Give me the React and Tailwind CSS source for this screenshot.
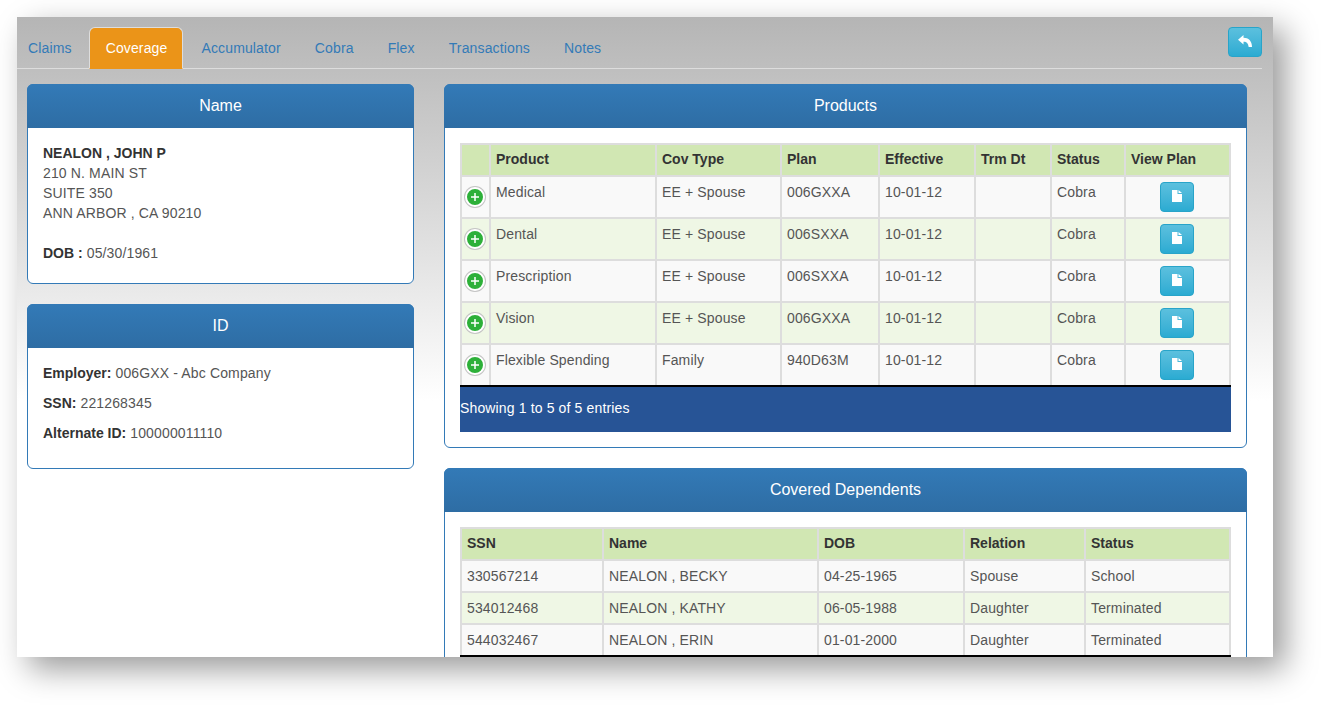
const tabs = ["Claims", "Coverage", "Accumulator", "Cobra", "Flex", "Transactions", "Notes"];

const products = [
  ["Medical", "EE + Spouse", "006GXXA", "10-01-12", "", "Cobra"],
  ["Dental", "EE + Spouse", "006SXXA", "10-01-12", "", "Cobra"],
  ["Prescription", "EE + Spouse", "006SXXA", "10-01-12", "", "Cobra"],
  ["Vision", "EE + Spouse", "006GXXA", "10-01-12", "", "Cobra"],
  ["Flexible Spending", "Family", "940D63M", "10-01-12", "", "Cobra"],
];

const dependents = [
  ["330567214", "NEALON , BECKY", "04-25-1965", "Spouse", "School"],
  ["534012468", "NEALON , KATHY", "06-05-1988", "Daughter", "Terminated"],
  ["544032467", "NEALON , ERIN", "01-01-2000", "Daughter", "Terminated"],
];

function Panel({ title, children, className = "" }) {
  return (
    <section className={`rounded-md border border-[#337ab7] bg-white ${className}`}>
      <h2 className="-mx-px -mt-px flex h-11 items-center justify-center rounded-t-md bg-linear-to-b from-[#337ab7] to-[#2e6da4] text-base tracking-normal text-white">
        {title}
      </h2>
      {children}
    </section>
  );
}

function ReplyIcon() {
  return (
    <svg viewBox="0 0 14 12" className="mb-0.5 h-3 w-3.5 fill-white">
      <path d="M5.500 0 0 4.700 5.500 9.500V6.800C8.500 6.600 10 8 10.700 12H14C14 6 10.500 2.800 5.500 2.800Z" />
    </svg>
  );
}

function FileIcon() {
  return (
    <svg viewBox="0 0 10 12" className="mb-0.5 h-3 w-2.5 fill-white">
      <path d="M0 0h5.500v4H10v8H0Z" />
      <path d="M6.500 0 10 3H6.500Z" />
    </svg>
  );
}

function PlusBadge() {
  return (
    <span className="mx-auto flex size-5 items-center justify-center rounded-full border-2 border-white bg-[#2db039] shadow-[0_0_0_1px_#c4c4c4]">
      <svg viewBox="0 0 8 8" className="size-2 stroke-white stroke-[1.5]">
        <path d="M4 0v8M0 4h8" />
      </svg>
    </span>
  );
}

const thClass = "h-8 border-2 border-[#ddd] bg-[#d1e7b3] px-1.25 pb-0.5 text-left font-bold tracking-normal text-[#333]";

export default function App() {
  return (
    <div className="h-[705px] overflow-hidden bg-white pt-[17px] pl-[17px] font-['Liberation_Sans',Arial,sans-serif] text-sm tracking-[0.01em] text-[#555]">
      <div className="h-[640px] w-[1256px] overflow-hidden bg-white bg-linear-to-b from-[#b5b5b5] to-white to-60% shadow-[12px_12px_30px_rgba(0,0,0,0.4)]">
        <div className="mr-2.75 flex items-start justify-between border-b border-[#ddd] pt-2.5">
          <ul className="-mb-px -ml-[5px] flex">
            {tabs.map((t) =>
              t === "Coverage" ? (
                <li key={t} className="mr-0.5 rounded-t-md border border-[#ddd] border-b-transparent bg-[#eb9418] py-2.5 pr-[15px] pl-4 leading-5 text-white">
                  {t}
                </li>
              ) : (
                <li key={t} className={`${t === "Claims" ? "mr-px" : "mr-0.5"} border border-transparent px-[15px] py-2.5 leading-5 text-[#337ab7]`}>
                  {t}
                </li>
              ),
            )}
          </ul>
          <button className="flex h-7.5 w-8.5 items-center justify-center rounded border border-[#28a4c9] bg-linear-to-b from-[#5bc0de] to-[#2aabd2]">
            <ReplyIcon />
          </button>
        </div>

        <div className="mt-3.75 grid grid-cols-[387px_803px] items-start gap-x-7.5 pl-2.5">
          <div className="flex flex-col gap-5">
            <Panel title="Name">
              <div className="px-3.75 pt-3.75 pb-5 leading-5">
                <strong className="tracking-normal text-[#333]">NEALON , JOHN P</strong>
                <br />
                210 N. MAIN ST
                <br />
                SUITE 350
                <br />
                ANN ARBOR , CA 90210
                <br />
                <br />
                <strong className="tracking-normal text-[#333]">DOB :</strong> 05/30/1961
              </div>
            </Panel>
            <Panel title="ID">
              <div className="px-3.75 pt-3.75 pb-3.75 leading-5">
                <p className="mb-2.5"><strong className="tracking-normal text-[#333]">Employer:</strong> 006GXX - Abc Company</p>
                <p className="mb-2.5"><strong className="tracking-normal text-[#333]">SSN:</strong> 221268345</p>
                <p className="mb-2.5"><strong className="tracking-normal text-[#333]">Alternate ID:</strong> 100000011110</p>
              </div>
            </Panel>
          </div>

          <div className="flex flex-col gap-5">
            <Panel title="Products">
              <div className="p-3.75">
                <table className="w-[771px] table-fixed border-collapse">
                  <colgroup>
                    <col className="w-[29px]" />
                    <col className="w-[166px]" />
                    <col className="w-[125px]" />
                    <col className="w-[98px]" />
                    <col className="w-[96px]" />
                    <col className="w-[76px]" />
                    <col className="w-[74px]" />
                    <col className="w-[105px]" />
                  </colgroup>
                  <thead>
                    <tr>
                      {["", "Product", "Cov Type", "Plan", "Effective", "Trm Dt", "Status", "View Plan"].map((h, i) => (
                        <th key={i} className={thClass}>{h}</th>
                      ))}
                    </tr>
                  </thead>
                  <tbody>
                    {products.map((row, r) => {
                      const bg = r % 2 ? "bg-[#eff7e5]" : "bg-[#f9f9f9]";
                      return (
                        <tr key={r} className={bg}>
                          <td className="h-10.5 border-2 border-[#ddd] pr-px">
                            <PlusBadge />
                          </td>
                          {row.map((c, i) => (
                            <td key={i} className="h-10.5 border-2 border-[#ddd] px-1.25 py-1.25 align-top leading-5">
                              {c}
                            </td>
                          ))}
                          <td className="h-10.5 border-2 border-[#ddd] pr-px">
                            <button className="mx-auto flex h-7.5 w-8.5 items-center justify-center rounded border border-[#28a4c9] bg-linear-to-b from-[#5bc0de] to-[#2aabd2]">
                              <FileIcon />
                            </button>
                          </td>
                        </tr>
                      );
                    })}
                  </tbody>
                </table>
                <div className="-mt-0.5 flex h-11.75 items-center border-t-2 border-black bg-[#275496] pb-1 leading-5 text-white">
                  Showing 1 to 5 of 5 entries
                </div>
              </div>
            </Panel>

            <Panel title="Covered Dependents">
              <div className="p-3.75">
                <table className="w-[771px] table-fixed border-collapse">
                  <colgroup>
                    <col className="w-[142px]" />
                    <col className="w-[215px]" />
                    <col className="w-[146px]" />
                    <col className="w-[121px]" />
                    <col className="w-[145px]" />
                  </colgroup>
                  <thead>
                    <tr>
                      {["SSN", "Name", "DOB", "Relation", "Status"].map((h) => (
                        <th key={h} className={thClass}>{h}</th>
                      ))}
                    </tr>
                  </thead>
                  <tbody>
                    {dependents.map((row, r) => (
                      <tr key={r} className={r % 2 ? "bg-[#eff7e5]" : "bg-[#f9f9f9]"}>
                        {row.map((c, i) => (
                          <td key={i} className="h-8 border-2 border-[#ddd] px-1.25 py-1.25 leading-5">
                            {c}
                          </td>
                        ))}
                      </tr>
                    ))}
                  </tbody>
                </table>
                <div className="-mt-0.5 h-0.5 bg-black" />
              </div>
            </Panel>
          </div>
        </div>
      </div>
    </div>
  );
}
